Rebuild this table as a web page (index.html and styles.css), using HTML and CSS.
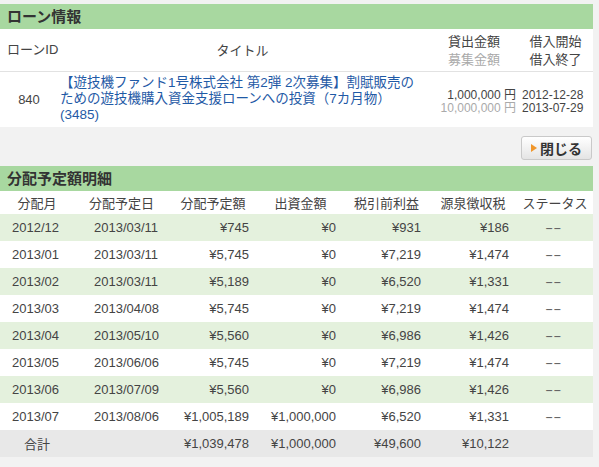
FILE: index.html
```html
<!DOCTYPE html>
<html lang="ja">
<head>
<meta charset="utf-8">
<link rel="stylesheet" href="styles.css">
</head>
<body>
<div class="page">
  <h2 class="sec-title">ローン情報</h2>
  <table class="loan">
    <colgroup>
      <col class="c-id"><col class="c-title"><col class="c-amt"><col class="c-date">
    </colgroup>
    <thead>
      <tr>
        <th class="th-id">ローンID</th>
        <th>タイトル</th>
        <th>貸出金額<br><span class="muted">募集金額</span></th>
        <th>借入開始<br>借入終了</th>
      </tr>
    </thead>
    <tbody>
      <tr>
        <td class="td-id">840</td>
        <td class="td-title"><a href="#">【遊技機ファンド1号株式会社 第2弾 2次募集】割賦販売のための遊技機購入資金支援ローンへの投資（7カ月物）(3485)</a></td>
        <td class="td-amt">1,000,000 円<br><span class="muted">10,000,000 円</span></td>
        <td class="td-date">2012-12-28<br>2013-07-29</td>
      </tr>
    </tbody>
  </table>
  <div class="actions">
    <button class="btn"><span class="tri"></span>閉じる</button>
  </div>
  <h2 class="sec-title">分配予定額明細</h2>
  <table class="dist">
    <colgroup>
      <col class="d1"><col class="d2"><col class="d3"><col class="d4"><col class="d5"><col class="d6"><col class="d7">
    </colgroup>
    <thead>
      <tr>
        <th>分配月</th><th>分配予定日</th><th>分配予定額</th><th>出資金額</th><th>税引前利益</th><th>源泉徴収税</th><th>ステータス</th>
      </tr>
    </thead>
    <tbody>
      <tr class="odd"><td class="m">2012/12</td><td class="dt">2013/03/11</td><td class="n">¥745</td><td class="n">¥0</td><td class="n">¥931</td><td class="n">¥186</td><td class="s"><span class="dash">--</span></td></tr>
      <tr><td class="m">2013/01</td><td class="dt">2013/03/11</td><td class="n">¥5,745</td><td class="n">¥0</td><td class="n">¥7,219</td><td class="n">¥1,474</td><td class="s"><span class="dash">--</span></td></tr>
      <tr class="odd"><td class="m">2013/02</td><td class="dt">2013/03/11</td><td class="n">¥5,189</td><td class="n">¥0</td><td class="n">¥6,520</td><td class="n">¥1,331</td><td class="s"><span class="dash">--</span></td></tr>
      <tr><td class="m">2013/03</td><td class="dt">2013/04/08</td><td class="n">¥5,745</td><td class="n">¥0</td><td class="n">¥7,219</td><td class="n">¥1,474</td><td class="s"><span class="dash">--</span></td></tr>
      <tr class="odd"><td class="m">2013/04</td><td class="dt">2013/05/10</td><td class="n">¥5,560</td><td class="n">¥0</td><td class="n">¥6,986</td><td class="n">¥1,426</td><td class="s"><span class="dash">--</span></td></tr>
      <tr><td class="m">2013/05</td><td class="dt">2013/06/06</td><td class="n">¥5,745</td><td class="n">¥0</td><td class="n">¥7,219</td><td class="n">¥1,474</td><td class="s"><span class="dash">--</span></td></tr>
      <tr class="odd"><td class="m">2013/06</td><td class="dt">2013/07/09</td><td class="n">¥5,560</td><td class="n">¥0</td><td class="n">¥6,986</td><td class="n">¥1,426</td><td class="s"><span class="dash">--</span></td></tr>
      <tr><td class="m">2013/07</td><td class="dt">2013/08/06</td><td class="n">¥1,005,189</td><td class="n">¥1,000,000</td><td class="n">¥6,520</td><td class="n">¥1,331</td><td class="s"><span class="dash">--</span></td></tr>
      <tr class="total"><td class="tl">合計</td><td></td><td class="n">¥1,039,478</td><td class="n">¥1,000,000</td><td class="n">¥49,600</td><td class="n">¥10,122</td><td></td></tr>
    </tbody>
  </table>
</div>
</body>
</html>
```

FILE: styles.css
```css
html, body {
  margin: 0;
  padding: 0;
  background: #f2f2f2;
}
body {
  font-family: "Liberation Sans", "Noto Sans CJK JP", sans-serif;
  font-size: 13px;
  color: #444;
}
.page {
  width: 593px;
  padding-top: 4px;
}
.sec-title {
  margin: 0;
  height: 25px;
  line-height: 25px;
  padding-left: 7px;
  background: #a8d8a0;
  color: #333;
  font-size: 15px;
  font-weight: bold;
}
table {
  width: 593px;
  border-collapse: collapse;
  table-layout: fixed;
  background: #fff;
}
th, td {
  padding: 0;
  font-weight: normal;
}
/* loan table */
.c-id { width: 55px; }
.c-title { width: 375px; }
.c-amt { width: 88px; }
.c-date { width: 75px; }
.loan thead tr {
  height: 42px;
  border-bottom: 1px solid #e2e2e2;
}
.loan th {
  text-align: center;
  line-height: 18px;
  padding-top: 2px;
}
.loan th.th-id {
  text-align: left;
  padding-left: 7px;
  padding-top: 0;
  white-space: nowrap;
}
.muted { color: #aaa; }
.loan tbody tr { height: 56px; }
.td-id { text-align: center; padding-left: 3px !important; }
.td-title {
  padding-left: 5px !important;
  padding-right: 14px !important;
  line-height: 16px;
  font-size: 13.5px;
}
.td-title a {
  color: #1f5aa6;
  text-decoration: none;
}
.td-amt {
  text-align: right;
  line-height: 13px;
  font-size: 12px;
  padding-right: 2px !important;
  padding-top: 6px !important;
  white-space: nowrap;
}
.td-date {
  font-size: 12px;
  line-height: 13px;
  padding-left: 4px !important;
  padding-top: 6px !important;
  white-space: nowrap;
}
/* actions */
.actions {
  display: flex;
  justify-content: flex-end;
  padding: 9px 1px 6px 0;
}
.btn {
  height: 24px;
  width: 71px;
  border: 1px solid #c9c9c9;
  border-radius: 3px;
  background: linear-gradient(#ffffff, #e4e4e4);
  font-family: "Liberation Sans", "Noto Sans CJK JP", sans-serif;
  font-size: 14px;
  font-weight: bold;
  color: #333;
  display: flex;
  align-items: center;
  justify-content: center;
  gap: 3px;
  padding: 0;
}
.tri {
  width: 0;
  height: 0;
  border-left: 6px solid #f0962a;
  border-top: 4px solid transparent;
  border-bottom: 4px solid transparent;
}
/* distribution table */
.d1 { width: 74px; }
.d2 { width: 95px; }
.d3 { width: 88px; }
.d4 { width: 87px; }
.d5 { width: 85px; }
.d6 { width: 88px; }
.d7 { width: 76px; }
.dist thead tr { height: 23px; }
.dist th { text-align: center; }
.dist tbody tr { height: 27px; }
.dist tr.odd { background: #e4f1dd; }
.dist tr.total { background: #e8e8e8; }
.dist td.m { padding-left: 12px; }
.dist td.dt { padding-left: 20px; }
.dist td.n { text-align: right; padding-right: 8px; }
.dist td.s { text-align: center; padding-right: 3px; color: #666; }
.dash { display: inline-block; transform: scaleX(1.9); }
.dist td.tl { text-align: center; }
```
